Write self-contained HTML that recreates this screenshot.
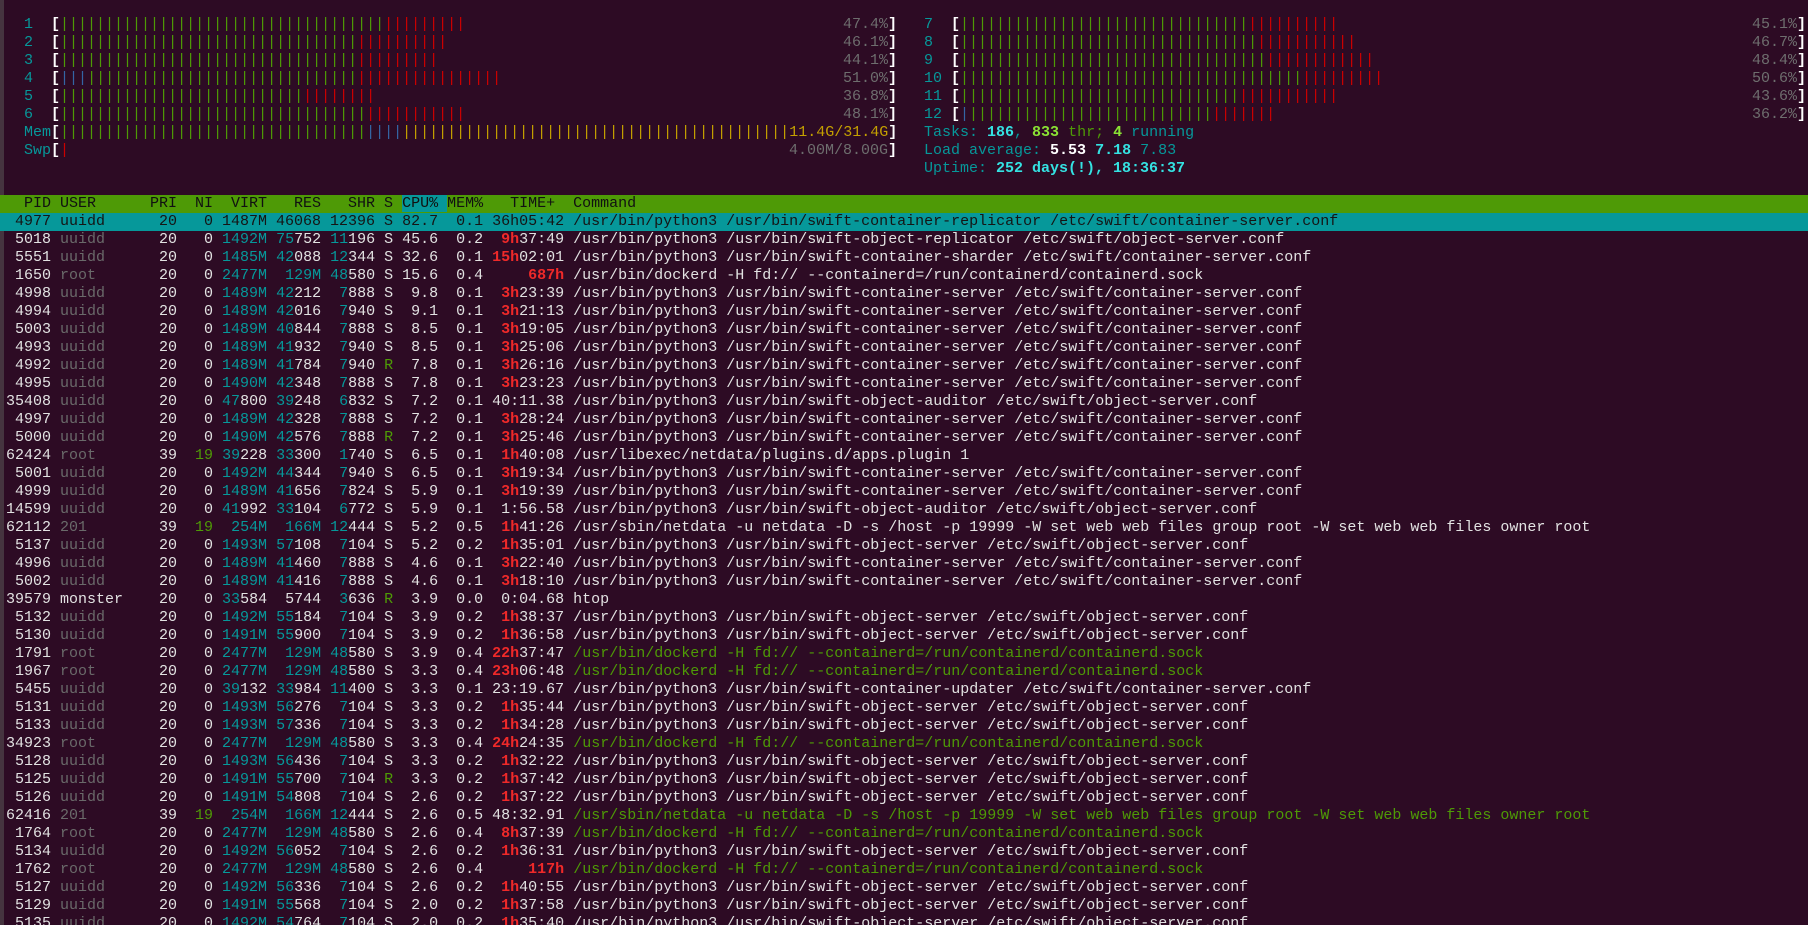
<!DOCTYPE html>
<html><head><meta charset="utf-8"><style>
html,body{margin:0;padding:0;background:#2d0b24;width:1808px;height:925px;overflow:hidden}
body{font-family:"Liberation Mono",monospace;font-size:15px;line-height:18px;color:#e2e2e2;position:relative}
.a{position:absolute;white-space:pre;height:18px}
.c{color:#06989a}.gr{color:#4e9a06}.rd{color:#cc0000}.b{color:#3465a4}.y{color:#c4a000}
.p{color:#6e6e6e}.wb{color:#ffffff;font-weight:bold}
.bc{color:#34e2e2;font-weight:bold}.bg{color:#8ae234;font-weight:bold}
.row{white-space:pre;height:18px;padding-left:6px;width:1802px}
.u{color:#6a6a6a}.h{color:#ef2929;font-weight:bold}.t{color:#4e9a06}
#tbl{position:absolute;top:195px;left:0}
.hd{background:#4e9a06;color:#111}
.hd .s{background:#06989a}
.sel{background:#06989a;color:#151515}
.edge{position:absolute;left:0;top:0;width:4px;height:925px;background:#45343f}
</style></head><body>
<div class="edge"></div>
<div class="a" style="top:16px;left:6px">  <span class="c">1  </span><span class="wb">[</span><span class="gr">||||||||||||||||||||||||||||||||||||</span><span class="rd">|||||||||</span></div>
<div class="a p" style="top:16px;right:911px">47.4%<span class="wb">]</span></div>
<div class="a" style="top:34px;left:6px">  <span class="c">2  </span><span class="wb">[</span><span class="gr">|||||||||||||||||||||||||||||||||</span><span class="rd">||||||||||</span></div>
<div class="a p" style="top:34px;right:911px">46.1%<span class="wb">]</span></div>
<div class="a" style="top:52px;left:6px">  <span class="c">3  </span><span class="wb">[</span><span class="gr">|||||||||||||||||||||||||||||||||</span><span class="rd">|||||||||</span></div>
<div class="a p" style="top:52px;right:911px">44.1%<span class="wb">]</span></div>
<div class="a" style="top:70px;left:6px">  <span class="c">4  </span><span class="wb">[</span><span class="b">|||</span><span class="gr">||||||||||||||||||||||||||||||</span><span class="rd">||||||||||||||||</span></div>
<div class="a p" style="top:70px;right:911px">51.0%<span class="wb">]</span></div>
<div class="a" style="top:88px;left:6px">  <span class="c">5  </span><span class="wb">[</span><span class="gr">|||||||||||||||||||||||||||</span><span class="rd">||||||||</span></div>
<div class="a p" style="top:88px;right:911px">36.8%<span class="wb">]</span></div>
<div class="a" style="top:106px;left:6px">  <span class="c">6  </span><span class="wb">[</span><span class="gr">||||||||||||||||||||||||||||||||||</span><span class="rd">|||||||||||</span></div>
<div class="a p" style="top:106px;right:911px">48.1%<span class="wb">]</span></div>
<div class="a" style="top:124px;left:6px">  <span class="c">Mem</span><span class="wb">[</span><span class="gr">||||||||||||||||||||||||||||||||||</span><span class="b">||||</span><span class="y">|||||||||||||||||||||||||||||||||||||||||||11.4G/31.4G</span><span class="wb">]</span></div>
<div class="a" style="top:142px;left:6px">  <span class="c">Swp</span><span class="wb">[</span><span class="rd">|</span></div>
<div class="a p" style="top:142px;right:911px">4.00M/8.00G<span class="wb">]</span></div>

<div class="a" style="top:16px;left:924px"><span class="c">7  </span><span class="wb">[</span><span class="gr">||||||||||||||||||||||||||||||||</span><span class="rd">||||||||||</span></div>
<div class="a p" style="top:16px;right:2px">45.1%<span class="wb">]</span></div>
<div class="a" style="top:34px;left:924px"><span class="c">8  </span><span class="wb">[</span><span class="gr">|||||||||||||||||||||||||||||||||</span><span class="rd">|||||||||||</span></div>
<div class="a p" style="top:34px;right:2px">46.7%<span class="wb">]</span></div>
<div class="a" style="top:52px;left:924px"><span class="c">9  </span><span class="wb">[</span><span class="gr">||||||||||||||||||||||||||||||||||</span><span class="rd">||||||||||||</span></div>
<div class="a p" style="top:52px;right:2px">48.4%<span class="wb">]</span></div>
<div class="a" style="top:70px;left:924px"><span class="c">10 </span><span class="wb">[</span><span class="gr">||||||||||||||||||||||||||||||||||||||</span><span class="rd">|||||||||</span></div>
<div class="a p" style="top:70px;right:2px">50.6%<span class="wb">]</span></div>
<div class="a" style="top:88px;left:924px"><span class="c">11 </span><span class="wb">[</span><span class="gr">|||||||||||||||||||||||||||||||</span><span class="rd">|||||||||||</span></div>
<div class="a p" style="top:88px;right:2px">43.6%<span class="wb">]</span></div>
<div class="a" style="top:106px;left:924px"><span class="c">12 </span><span class="wb">[</span><span class="b">|</span><span class="gr">|||||||||||||||||||||||||||</span><span class="rd">|||||||</span></div>
<div class="a p" style="top:106px;right:2px">36.2%<span class="wb">]</span></div>
<div class="a c" style="top:124px;left:924px">Tasks: <span class="bc">186</span>, <span class="bg">833</span> <span class="gr">thr;</span> <span class="bg">4</span> running</div>
<div class="a c" style="top:142px;left:924px">Load average: <span class="wb">5.53</span> <span class="bc">7.18</span> 7.83</div>
<div class="a c" style="top:160px;left:924px">Uptime: <span class="bc">252 days(!), 18:36:37</span></div>

<div id="tbl">
<div class="row hd">  PID USER      PRI  NI  VIRT   RES   SHR S <span class="s">CPU% </span>MEM%   TIME+  Command</div>
<div class="row sel"> 4977 uuidd      20   0 1487M 46068 12396 S 82.7  0.1 36h05:42 /usr/bin/python3 /usr/bin/swift-container-replicator /etc/swift/container-server.conf</div>
<div class="row"> 5018 <span class="u">uuidd    </span>  20   0 <span class="c">1492M</span> <span class="c">75</span>752 <span class="c">11</span>196 S 45.6  0.2 <span class="h"> 9h</span>37:49 /usr/bin/python3 /usr/bin/swift-object-replicator /etc/swift/object-server.conf</div>
<div class="row"> 5551 <span class="u">uuidd    </span>  20   0 <span class="c">1485M</span> <span class="c">42</span>088 <span class="c">12</span>344 S 32.6  0.1 <span class="h">15h</span>02:01 /usr/bin/python3 /usr/bin/swift-container-sharder /etc/swift/container-server.conf</div>
<div class="row"> 1650 <span class="u">root     </span>  20   0 <span class="c">2477M</span>  <span class="c">129M</span> <span class="c">48</span>580 S 15.6  0.4 <span class="h">    687h</span> /usr/bin/dockerd -H fd:// --containerd=/run/containerd/containerd.sock</div>
<div class="row"> 4998 <span class="u">uuidd    </span>  20   0 <span class="c">1489M</span> <span class="c">42</span>212  <span class="c">7</span>888 S  9.8  0.1 <span class="h"> 3h</span>23:39 /usr/bin/python3 /usr/bin/swift-container-server /etc/swift/container-server.conf</div>
<div class="row"> 4994 <span class="u">uuidd    </span>  20   0 <span class="c">1489M</span> <span class="c">42</span>016  <span class="c">7</span>940 S  9.1  0.1 <span class="h"> 3h</span>21:13 /usr/bin/python3 /usr/bin/swift-container-server /etc/swift/container-server.conf</div>
<div class="row"> 5003 <span class="u">uuidd    </span>  20   0 <span class="c">1489M</span> <span class="c">40</span>844  <span class="c">7</span>888 S  8.5  0.1 <span class="h"> 3h</span>19:05 /usr/bin/python3 /usr/bin/swift-container-server /etc/swift/container-server.conf</div>
<div class="row"> 4993 <span class="u">uuidd    </span>  20   0 <span class="c">1489M</span> <span class="c">41</span>932  <span class="c">7</span>940 S  8.5  0.1 <span class="h"> 3h</span>25:06 /usr/bin/python3 /usr/bin/swift-container-server /etc/swift/container-server.conf</div>
<div class="row"> 4992 <span class="u">uuidd    </span>  20   0 <span class="c">1489M</span> <span class="c">41</span>784  <span class="c">7</span>940 <span class="t">R</span>  7.8  0.1 <span class="h"> 3h</span>26:16 /usr/bin/python3 /usr/bin/swift-container-server /etc/swift/container-server.conf</div>
<div class="row"> 4995 <span class="u">uuidd    </span>  20   0 <span class="c">1490M</span> <span class="c">42</span>348  <span class="c">7</span>888 S  7.8  0.1 <span class="h"> 3h</span>23:23 /usr/bin/python3 /usr/bin/swift-container-server /etc/swift/container-server.conf</div>
<div class="row">35408 <span class="u">uuidd    </span>  20   0 <span class="c">47</span>800 <span class="c">39</span>248  <span class="c">6</span>832 S  7.2  0.1 40:11.38 /usr/bin/python3 /usr/bin/swift-object-auditor /etc/swift/object-server.conf</div>
<div class="row"> 4997 <span class="u">uuidd    </span>  20   0 <span class="c">1489M</span> <span class="c">42</span>328  <span class="c">7</span>888 S  7.2  0.1 <span class="h"> 3h</span>28:24 /usr/bin/python3 /usr/bin/swift-container-server /etc/swift/container-server.conf</div>
<div class="row"> 5000 <span class="u">uuidd    </span>  20   0 <span class="c">1490M</span> <span class="c">42</span>576  <span class="c">7</span>888 <span class="t">R</span>  7.2  0.1 <span class="h"> 3h</span>25:46 /usr/bin/python3 /usr/bin/swift-container-server /etc/swift/container-server.conf</div>
<div class="row">62424 <span class="u">root     </span>  39  <span class="t">19</span> <span class="c">39</span>228 <span class="c">33</span>300  <span class="c">1</span>740 S  6.5  0.1 <span class="h"> 1h</span>40:08 /usr/libexec/netdata/plugins.d/apps.plugin 1</div>
<div class="row"> 5001 <span class="u">uuidd    </span>  20   0 <span class="c">1492M</span> <span class="c">44</span>344  <span class="c">7</span>940 S  6.5  0.1 <span class="h"> 3h</span>19:34 /usr/bin/python3 /usr/bin/swift-container-server /etc/swift/container-server.conf</div>
<div class="row"> 4999 <span class="u">uuidd    </span>  20   0 <span class="c">1489M</span> <span class="c">41</span>656  <span class="c">7</span>824 S  5.9  0.1 <span class="h"> 3h</span>19:39 /usr/bin/python3 /usr/bin/swift-container-server /etc/swift/container-server.conf</div>
<div class="row">14599 <span class="u">uuidd    </span>  20   0 <span class="c">41</span>992 <span class="c">33</span>104  <span class="c">6</span>772 S  5.9  0.1  1:56.58 /usr/bin/python3 /usr/bin/swift-object-auditor /etc/swift/object-server.conf</div>
<div class="row">62112 <span class="u">201      </span>  39  <span class="t">19</span>  <span class="c">254M</span>  <span class="c">166M</span> <span class="c">12</span>444 S  5.2  0.5 <span class="h"> 1h</span>41:26 /usr/sbin/netdata -u netdata -D -s /host -p 19999 -W set web web files group root -W set web web files owner root</div>
<div class="row"> 5137 <span class="u">uuidd    </span>  20   0 <span class="c">1493M</span> <span class="c">57</span>108  <span class="c">7</span>104 S  5.2  0.2 <span class="h"> 1h</span>35:01 /usr/bin/python3 /usr/bin/swift-object-server /etc/swift/object-server.conf</div>
<div class="row"> 4996 <span class="u">uuidd    </span>  20   0 <span class="c">1489M</span> <span class="c">41</span>460  <span class="c">7</span>888 S  4.6  0.1 <span class="h"> 3h</span>22:40 /usr/bin/python3 /usr/bin/swift-container-server /etc/swift/container-server.conf</div>
<div class="row"> 5002 <span class="u">uuidd    </span>  20   0 <span class="c">1489M</span> <span class="c">41</span>416  <span class="c">7</span>888 S  4.6  0.1 <span class="h"> 3h</span>18:10 /usr/bin/python3 /usr/bin/swift-container-server /etc/swift/container-server.conf</div>
<div class="row">39579 monster    20   0 <span class="c">33</span>584  5744  <span class="c">3</span>636 <span class="t">R</span>  3.9  0.0  0:04.68 htop</div>
<div class="row"> 5132 <span class="u">uuidd    </span>  20   0 <span class="c">1492M</span> <span class="c">55</span>184  <span class="c">7</span>104 S  3.9  0.2 <span class="h"> 1h</span>38:37 /usr/bin/python3 /usr/bin/swift-object-server /etc/swift/object-server.conf</div>
<div class="row"> 5130 <span class="u">uuidd    </span>  20   0 <span class="c">1491M</span> <span class="c">55</span>900  <span class="c">7</span>104 S  3.9  0.2 <span class="h"> 1h</span>36:58 /usr/bin/python3 /usr/bin/swift-object-server /etc/swift/object-server.conf</div>
<div class="row"> 1791 <span class="u">root     </span>  20   0 <span class="c">2477M</span>  <span class="c">129M</span> <span class="c">48</span>580 S  3.9  0.4 <span class="h">22h</span>37:47 <span class="t">/usr/bin/dockerd -H fd:// --containerd=/run/containerd/containerd.sock</span></div>
<div class="row"> 1967 <span class="u">root     </span>  20   0 <span class="c">2477M</span>  <span class="c">129M</span> <span class="c">48</span>580 S  3.3  0.4 <span class="h">23h</span>06:48 <span class="t">/usr/bin/dockerd -H fd:// --containerd=/run/containerd/containerd.sock</span></div>
<div class="row"> 5455 <span class="u">uuidd    </span>  20   0 <span class="c">39</span>132 <span class="c">33</span>984 <span class="c">11</span>400 S  3.3  0.1 23:19.67 /usr/bin/python3 /usr/bin/swift-container-updater /etc/swift/container-server.conf</div>
<div class="row"> 5131 <span class="u">uuidd    </span>  20   0 <span class="c">1493M</span> <span class="c">56</span>276  <span class="c">7</span>104 S  3.3  0.2 <span class="h"> 1h</span>35:44 /usr/bin/python3 /usr/bin/swift-object-server /etc/swift/object-server.conf</div>
<div class="row"> 5133 <span class="u">uuidd    </span>  20   0 <span class="c">1493M</span> <span class="c">57</span>336  <span class="c">7</span>104 S  3.3  0.2 <span class="h"> 1h</span>34:28 /usr/bin/python3 /usr/bin/swift-object-server /etc/swift/object-server.conf</div>
<div class="row">34923 <span class="u">root     </span>  20   0 <span class="c">2477M</span>  <span class="c">129M</span> <span class="c">48</span>580 S  3.3  0.4 <span class="h">24h</span>24:35 <span class="t">/usr/bin/dockerd -H fd:// --containerd=/run/containerd/containerd.sock</span></div>
<div class="row"> 5128 <span class="u">uuidd    </span>  20   0 <span class="c">1493M</span> <span class="c">56</span>436  <span class="c">7</span>104 S  3.3  0.2 <span class="h"> 1h</span>32:22 /usr/bin/python3 /usr/bin/swift-object-server /etc/swift/object-server.conf</div>
<div class="row"> 5125 <span class="u">uuidd    </span>  20   0 <span class="c">1491M</span> <span class="c">55</span>700  <span class="c">7</span>104 <span class="t">R</span>  3.3  0.2 <span class="h"> 1h</span>37:42 /usr/bin/python3 /usr/bin/swift-object-server /etc/swift/object-server.conf</div>
<div class="row"> 5126 <span class="u">uuidd    </span>  20   0 <span class="c">1491M</span> <span class="c">54</span>808  <span class="c">7</span>104 S  2.6  0.2 <span class="h"> 1h</span>37:22 /usr/bin/python3 /usr/bin/swift-object-server /etc/swift/object-server.conf</div>
<div class="row">62416 <span class="u">201      </span>  39  <span class="t">19</span>  <span class="c">254M</span>  <span class="c">166M</span> <span class="c">12</span>444 S  2.6  0.5 48:32.91 <span class="t">/usr/sbin/netdata -u netdata -D -s /host -p 19999 -W set web web files group root -W set web web files owner root</span></div>
<div class="row"> 1764 <span class="u">root     </span>  20   0 <span class="c">2477M</span>  <span class="c">129M</span> <span class="c">48</span>580 S  2.6  0.4 <span class="h"> 8h</span>37:39 <span class="t">/usr/bin/dockerd -H fd:// --containerd=/run/containerd/containerd.sock</span></div>
<div class="row"> 5134 <span class="u">uuidd    </span>  20   0 <span class="c">1492M</span> <span class="c">56</span>052  <span class="c">7</span>104 S  2.6  0.2 <span class="h"> 1h</span>36:31 /usr/bin/python3 /usr/bin/swift-object-server /etc/swift/object-server.conf</div>
<div class="row"> 1762 <span class="u">root     </span>  20   0 <span class="c">2477M</span>  <span class="c">129M</span> <span class="c">48</span>580 S  2.6  0.4 <span class="h">    117h</span> <span class="t">/usr/bin/dockerd -H fd:// --containerd=/run/containerd/containerd.sock</span></div>
<div class="row"> 5127 <span class="u">uuidd    </span>  20   0 <span class="c">1492M</span> <span class="c">56</span>336  <span class="c">7</span>104 S  2.6  0.2 <span class="h"> 1h</span>40:55 /usr/bin/python3 /usr/bin/swift-object-server /etc/swift/object-server.conf</div>
<div class="row"> 5129 <span class="u">uuidd    </span>  20   0 <span class="c">1491M</span> <span class="c">55</span>568  <span class="c">7</span>104 S  2.0  0.2 <span class="h"> 1h</span>37:58 /usr/bin/python3 /usr/bin/swift-object-server /etc/swift/object-server.conf</div>
<div class="row"> 5135 <span class="u">uuidd    </span>  20   0 <span class="c">1492M</span> <span class="c">54</span>764  <span class="c">7</span>104 S  2.0  0.2 <span class="h"> 1h</span>35:40 /usr/bin/python3 /usr/bin/swift-object-server /etc/swift/object-server.conf</div>
</div>
</body></html>
